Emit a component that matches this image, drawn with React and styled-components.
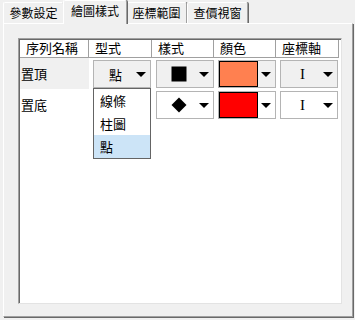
import styled, { createGlobalStyle } from 'styled-components';

const GlobalStyle = createGlobalStyle`
  html, body {
    margin: 0;
    padding: 0;
    background: #f0f0f0;
  }
  body {
    font-family: "Noto Sans CJK TC", "Liberation Sans", sans-serif;
    color: #000;
  }
`;

const columns = [
  { title: '序列名稱', width: 69 },
  { title: '型式', width: 63 },
  { title: '樣式', width: 62 },
  { title: '顏色', width: 62 },
  { title: '座標軸', width: 63 },
];

const rows = [
  { name: '置頂', type: '點', marker: 'square', color: '#ff8050', selected: true },
  { name: '置底', type: '', marker: 'diamond', color: '#ff0000', selected: false },
];

const App = () => {
  return (
    <Window>
      <GlobalStyle />
      <TabStrip>
        <Tab>參數設定</Tab>
        <Tab active>繪圖樣式</Tab>
        <Tab>座標範圍</Tab>
        <Tab>查價視窗</Tab>
      </TabStrip>
      <Panel>
        <Grid>
          <HeaderRow>
            {columns.map((c) => (
              <HeaderCell key={c.title} style={{ width: c.width }}>{c.title}</HeaderCell>
            ))}
          </HeaderRow>
          {rows.map((r, i) => (
            <Row key={r.name}>
              <NameCell selected={r.selected}>{r.name}</NameCell>
              <Cell w={63}>
                <Combo selected={r.selected}>
                  <ComboText>{r.type}</ComboText>
                  <Arrow />
                </Combo>
                {i === 0 && (
                  <DropList>
                    <DropItem>線條</DropItem>
                    <DropItem>柱圖</DropItem>
                    <DropItem active>點</DropItem>
                  </DropList>
                )}
              </Cell>
              <Cell w={62}>
                <Combo selected={r.selected}>
                  <ComboText>
                    <svg width="16" height="16" viewBox="0 0 16 16">
                      {r.marker === 'square' ? (
                        <rect x="0.5" y="0.5" width="15" height="15" fill="#000" />
                      ) : (
                        <polygon points="8,0.5 15.5,8 8,15.5 0.5,8" fill="#000" />
                      )}
                    </svg>
                  </ComboText>
                  <Arrow />
                </Combo>
              </Cell>
              <Cell w={62}>
                <Combo selected={r.selected}>
                  <Swatch style={{ background: r.color }} />
                  <Arrow />
                </Combo>
              </Cell>
              <Cell w={63}>
                <Combo selected={r.selected}>
                  <AxisText>I</AxisText>
                  <Arrow />
                </Combo>
              </Cell>
            </Row>
          ))}
        </Grid>
      </Panel>
    </Window>
  );
};

const Window = styled.div`
  width: 355px;
  height: 320px;
  box-sizing: border-box;
  display: flex;
  flex-direction: column;
  background: #f0f0f0;
`;

const TabStrip = styled.div`
  display: flex;
  align-items: flex-end;
  height: 23px;
  padding-left: 3px;
  position: relative;
  z-index: 2;
`;

const Tab = styled.div`
  box-sizing: border-box;
  width: ${(p) => (p.active ? '64px' : '61px')};
  height: ${(p) => (p.active ? '24px' : '21px')};
  margin: ${(p) => (p.active ? '0 -1px -1px -1px' : '0')};
  background: ${(p) => (p.active ? '#f0f0f0' : '#f0f0f0')};
  border-top: 1px solid #fff;
  border-left: 1px solid #fff;
  border-right: 1px solid #a0a0a0;
  box-shadow: 1px 0 0 #696969;
  font-size: 12px;
  line-height: ${(p) => (p.active ? '20px' : '19px')};
  text-align: center;
  white-space: nowrap;
  border-radius: 2px 2px 0 0;
  position: relative;
  z-index: ${(p) => (p.active ? 2 : 1)};
`;

const Panel = styled.div`
  box-sizing: border-box;
  margin: 0 2px 3px 3px;
  height: 294px;
  border-top: 1px solid #fff;
  border-left: 1px solid #fff;
  border-right: 1px solid #a0a0a0;
  border-bottom: 1px solid #a0a0a0;
  box-shadow: 1px 1px 0 #696969;
  padding: 14px 10px 12px 14px;
  display: flex;
`;

const Grid = styled.div`
  flex: 1;
  box-sizing: border-box;
  background: #fff;
  border-top: 1px solid #a0a0a0;
  border-left: 1px solid #a0a0a0;
  border-right: 1px solid #e3e3e3;
  border-bottom: 1px solid #e3e3e3;
  box-shadow: inset 1px 1px 0 #696969;
  padding: 1px 0 0 1px;
  display: flex;
  flex-direction: column;
`;

const HeaderRow = styled.div`
  display: flex;
  height: 18px;
`;

const HeaderCell = styled.div`
  box-sizing: border-box;
  height: 18px;
  border-right: 1px solid #a0a0a0;
  border-bottom: 1px solid #a0a0a0;
  padding-left: 6px;
  font-size: 13px;
  line-height: 16px;
  white-space: nowrap;
`;

const Row = styled.div`
  display: flex;
  height: 31px;
`;

const NameCell = styled.div`
  box-sizing: border-box;
  width: 69px;
  height: 31px;
  background: ${(p) => (p.selected ? '#f0f0f0' : '#fff')};
  font-size: 13px;
  display: flex;
  align-items: center;
  padding-left: 1px;
`;

const Cell = styled.div`
  position: relative;
  box-sizing: border-box;
  width: ${(p) => p.w}px;
  height: 31px;
  padding: 2px 1px 1px 4px;
`;

const Combo = styled.div`
  box-sizing: border-box;
  width: 58px;
  height: 28px;
  border: 1px solid #b4b4b4;
  background: ${(p) => (p.selected ? '#f0f0f0' : '#fff')};
  display: flex;
  align-items: center;
  padding: 0 4px 0 0;
`;

const ComboText = styled.div`
  flex: 1;
  display: flex;
  align-items: center;
  justify-content: center;
  font-size: 13px;
  padding-left: 4px;
`;

const AxisText = styled.div`
  flex: 1;
  text-align: center;
  font-family: "Liberation Serif", serif;
  font-size: 15px;
  padding-left: 4px;
`;

const Swatch = styled.div`
  box-sizing: border-box;
  width: 40px;
  height: 26px;
  border: 1px solid #000;
  margin-right: auto;
`;

const Arrow = styled.div`
  width: 0;
  height: 0;
  border-left: 5px solid transparent;
  border-right: 5px solid transparent;
  border-top: 5px solid #000;
  margin-left: 3px;
`;

const DropList = styled.div`
  position: absolute;
  left: 4px;
  top: 30px;
  width: 58px;
  box-sizing: border-box;
  border: 1px solid #646464;
  background: #fff;
  z-index: 5;
`;

const DropItem = styled.div`
  height: 23px;
  line-height: 23px;
  padding-left: 6px;
  font-size: 13px;
  background: ${(p) => (p.active ? '#cce4f7' : '#fff')};
`;

export default App;
